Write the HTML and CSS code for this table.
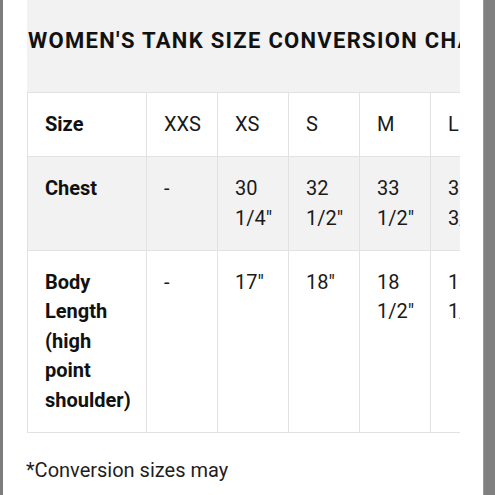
FILE: index.html
```html
<!DOCTYPE html>
<html>
<head>
<meta charset="utf-8">
<link rel="stylesheet" href="styles.css">
</head>
<body>
<div class="screen">
  <div class="edge-left"></div>
  <main class="main">
    <div class="panel">
      <h2 class="title">WOMEN'S TANK SIZE CONVERSION CHART</h2>
      <table class="chart">
        <colgroup>
          <col class="c-label"><col class="c-size"><col class="c-size"><col class="c-size"><col class="c-size"><col class="c-size"><col class="c-size">
        </colgroup>
        <tr class="row-head">
          <th>Size</th><td>XXS</td><td>XS</td><td>S</td><td>M</td><td>L</td><td>XL</td>
        </tr>
        <tr class="row-alt">
          <th>Chest</th><td>-</td><td>30 1/4"</td><td>32 1/2"</td><td>33 1/2"</td><td>35 3/4"</td><td>38"</td>
        </tr>
        <tr>
          <th>Body Length (high point shoulder)</th><td>-</td><td>17"</td><td>18"</td><td>18 1/2"</td><td>19 1/2"</td><td>20"</td>
        </tr>
      </table>
    </div>
    <p class="note">*Conversion sizes may</p>
  </main>
  <div class="edge-right"></div>
</div>
</body>
</html>
```

FILE: styles.css
```css
html, body {
  margin: 0;
  padding: 0;
  background: #ffffff;
}

body {
  font-family: Roboto, "Liberation Sans", sans-serif;
  color: #141414;
}

.screen {
  display: flex;
  width: 495px;
  height: 495px;
  overflow: hidden;
}

.edge-left {
  width: 3px;
  flex: none;
  background: #7d7d7d;
}

.edge-right {
  width: 12px;
  flex: none;
  background: #808080;
  border-left: 1px solid #9a9a9a;
  box-sizing: border-box;
}

.main {
  flex: 1;
  min-width: 0;
  padding-left: 24px;
}

.panel {
  width: 433px;
  overflow: hidden;
  background: #f2f2f2;
}

.title {
  margin: 0;
  height: 92px;
  box-sizing: border-box;
  padding-top: 26px;
  padding-left: 1px;
  font-size: 22px;
  line-height: 30px;
  font-weight: 700;
  letter-spacing: 1.3px;
  white-space: nowrap;
  color: #111111;
}

.chart {
  border-collapse: collapse;
  table-layout: fixed;
  width: 545px;
  background: #ffffff;
  font-size: 20px;
  line-height: 29.5px;
}

.c-label { width: 119px; }
.c-size { width: 71px; }

.chart th,
.chart td {
  border: 1px solid #e2e2e2;
  padding: 17px 17px 16.5px 17px;
  text-align: left;
  vertical-align: top;
}

.chart th {
  font-weight: 700;
  color: #111111;
}

.chart td {
  font-weight: 400;
  color: #1a1a1a;
}

.row-alt th,
.row-alt td {
  background: #f2f2f2;
}

.note {
  margin: 22px 0 0 -1px;
  font-size: 20px;
  line-height: 30px;
  color: #1e1e1e;
}
```
